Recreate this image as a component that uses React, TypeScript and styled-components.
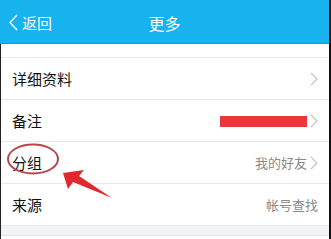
import React from "react";
import styled, { createGlobalStyle } from "styled-components";

const GlobalStyle = createGlobalStyle`
  html, body {
    margin: 0;
    padding: 0;
    background: #ffffff;
  }
  body {
    font-family: "Noto Sans CJK SC", "Noto Sans", sans-serif;
  }
`;

type Item = {
  label: string;
  value?: string;
  redacted?: boolean;
  arrow?: boolean;
};

const items: Item[] = [
  { label: "详细资料", arrow: true },
  { label: "备注", redacted: true, arrow: true },
  { label: "分组", value: "我的好友", arrow: true },
  { label: "来源", value: "帐号查找" },
];

const Chevron = ({ color, w, h, sw }: { color: string; w: number; h: number; sw: number }) => (
  <svg width={w} height={h} viewBox={`0 0 ${w} ${h}`} fill="none">
    <polyline
      points={`${w - 1},1 1,${h / 2} ${w - 1},${h - 1}`}
      stroke={color}
      strokeWidth={sw}
      strokeLinejoin="miter"
      fill="none"
    />
  </svg>
);

const RightChevron = () => (
  <svg width="8" height="14" viewBox="0 0 8 14" fill="none">
    <polyline points="1,1 7,7 1,13" stroke="#c4c4c8" strokeWidth="1.2" fill="none" />
  </svg>
);

const App = () => {
  return (
    <Page>
      <GlobalStyle />
      <Header>
        <Back>
          <Chevron color="#ffffff" w={9} h={17} sw={1.4} />
          <BackText>返回</BackText>
        </Back>
        <Title>更多</Title>
        <span />
      </Header>

      <Body>
        <Group>
          {items.map((it) => (
            <Row key={it.label}>
              <Label>{it.label}</Label>
              <Right>
                {it.redacted ? <Redact /> : null}
                {it.value ? <Value>{it.value}</Value> : null}
                {it.arrow ? <RightChevron /> : null}
              </Right>
            </Row>
          ))}
        </Group>
        <Gap />
        <NextGroup />

        {/* hand-drawn markup over the list */}
        <Annotation width="331" height="239" viewBox="0 0 331 239">
          <ellipse cx="33" cy="159" rx="25" ry="14.5" stroke="#b5474c" strokeWidth="2" fill="none" />
          <polygon points="63,173 84,170 79,176 112,198 73,182 68,189" fill="#e2282f" />
        </Annotation>
      </Body>
    </Page>
  );
};

export default App;

const Page = styled.div`
  position: relative;
  width: 331px;
  height: 239px;
  overflow: hidden;
  box-sizing: border-box;
  border-right: 2px solid #111;
  background: #fff;
`;

const Header = styled.div`
  height: 43px;
  background: #17b3ef;
  border-bottom: 1px solid #0e9cd4;
  display: grid;
  grid-template-columns: 1fr auto 1fr;
  align-items: center;
  padding: 0 0 0 9px;
  color: #fff;
`;

const Back = styled.div`
  display: flex;
  align-items: center;
  gap: 4px;
  padding-top: 2px;
`;

const BackText = styled.span`
  font-size: 15px;
  line-height: 1;
`;

const Title = styled.div`
  font-size: 16px;
  line-height: 1;
  padding-right: 9px;
  padding-top: 2px;
`;

const Body = styled.div`
  border-left: 1px solid #222;
  padding-top: 13px;
  height: 195px;
  box-sizing: border-box;
  background: #fff;
`;

const Group = styled.div`
  border-top: 1px solid #ececee;
`;

const Row = styled.div`
  height: 42px;
  box-sizing: border-box;
  border-bottom: 1px solid #e8e8ea;
  display: flex;
  align-items: center;
  justify-content: space-between;
  padding: 0 11px 0 11px;
`;

const Label = styled.span`
  font-size: 15px;
  color: #111;
  line-height: 1;
`;

const Right = styled.div`
  display: flex;
  align-items: center;
  gap: 3px;
`;

const Value = styled.span`
  font-size: 13px;
  color: #8a8a8a;
  line-height: 1;
`;

const Redact = styled.div`
  width: 87px;
  height: 11px;
  background: #e8383b;
  margin-top: 1px;
`;

const Gap = styled.div`
  height: 9px;
  background: #f2f3f5;
  border-bottom: 1px solid #e4e5e8;
`;

const NextGroup = styled.div`
  height: 20px;
  background: #fff;
`;

const Annotation = styled.svg`
  position: absolute;
  left: 0;
  top: 0;
  pointer-events: none;
`;
